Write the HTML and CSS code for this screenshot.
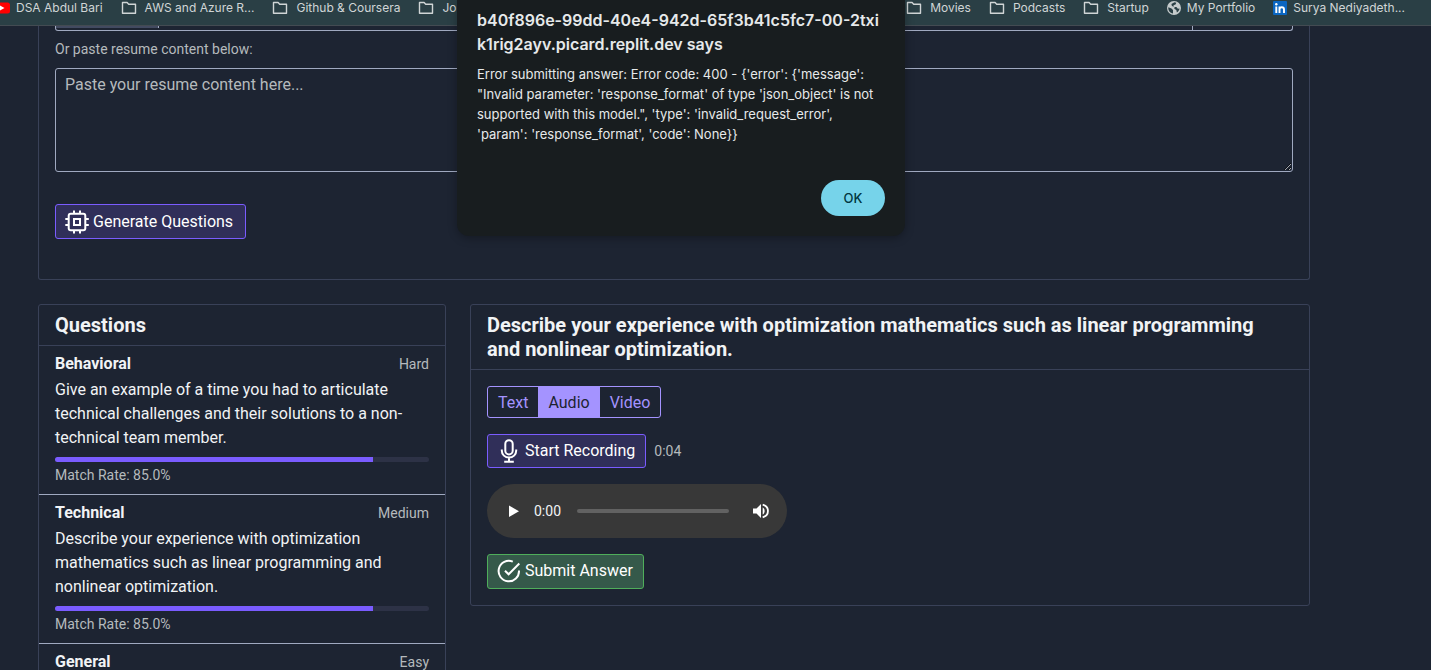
FILE: index.html
```html
<!DOCTYPE html>
<html lang="en">
<head>
<meta charset="utf-8">
<title>Interview Practice</title>
<link rel="stylesheet" href="styles.css">
</head>
<body>
<svg class="sprite" aria-hidden="true">
  <symbol id="folder" viewBox="0 0 16 14"><path d="M1.5 1.5h4.6l1.6 1.8h6.8v9H1.5z" fill="none" stroke="currentColor" stroke-width="1.4" stroke-linejoin="round"/></symbol>
</svg>
<nav class="bookmarks" aria-label="Bookmarks">
  <div class="bookmark-group">
    <a class="bookmark site" href="#"><svg class="yt" viewBox="6 0 10 14"><rect x="0" y="1.500" width="16" height="11" rx="2.500" fill="#f00"/><path d="M6 4.500v5l4.500-2.500z" fill="#fff"/></svg>DSA Abdul Bari</a>
    <a class="bookmark" href="#"><svg class="bm-icon"><use href="#folder"/></svg>AWS and Azure R...</a>
    <a class="bookmark" href="#"><svg class="bm-icon"><use href="#folder"/></svg>Github &amp; Coursera</a>
    <a class="bookmark" href="#"><svg class="bm-icon"><use href="#folder"/></svg>Jo</a>
  </div>
  <div class="bookmark-group">
    <a class="bookmark" href="#"><svg class="bm-icon"><use href="#folder"/></svg>Movies</a>
    <a class="bookmark" href="#"><svg class="bm-icon"><use href="#folder"/></svg>Podcasts</a>
    <a class="bookmark" href="#"><svg class="bm-icon"><use href="#folder"/></svg>Startup</a>
    <a class="bookmark site" href="#"><svg class="site-icon" viewBox="0 0 14 14"><circle cx="7" cy="7" r="7" fill="#c5cbcc"/><path d="M1.300 6.300l3.200 1.200 1.500 1.500v3.500C3 12.300 1 9.500 1.300 6.300zM7.500 1.300l1.800.5-.8 1.700-2 .8.300 1.500 2.600.3 1.500 1.600 1.600-.2c-.2 1.700-1.100 3.200-2.600 4l-.6-2.500-2-1.200.3-1.700-2.700-1-.5-2z" fill="#2a3f45"/></svg>My Portfolio</a>
    <a class="bookmark site" href="#"><svg class="site-icon" viewBox="0 0 14 14"><rect width="14" height="14" rx="1" fill="#0a66c2"/><circle cx="3.300" cy="3.300" r="1.200" fill="#fff"/><path d="M3.300 5.400V12M6.500 5.400V12M6.500 8.500c0-3 4.500-3 4.500 0V12" fill="none" stroke="#fff" stroke-width="1.900"/></svg>Surya Nediyadeth...</a>
  </div>
</nav>

<main class="page">
  <section class="card resume">
    <div class="upload-edge"><span class="choose"></span><span class="upload"></span></div>
    <label class="small" for="resume">Or paste resume content below:</label>
    <textarea id="resume" placeholder="Paste your resume content here..."></textarea>
    <button class="btn primary generate" type="button">
      <svg class="icon" viewBox="0 0 24 24"><rect x="3.700" y="3.700" width="16.600" height="16.600" rx="2"/><rect x="9" y="9" width="6" height="6"/><path d="M9 .500v3M15 .500v3M9 20.500v3M15 20.500v3M.300 9h3M.300 15h3M20.500 9h3.300M20.500 15h3.300"/></svg>
      Generate Questions</button>
  </section>

  <div class="columns">
    <section class="card questions">
      <h2 class="card-header">Questions</h2>
      <article class="question">
        <div class="question-top"><h3>Behavioral</h3><span class="small">Hard</span></div>
        <p>Give an example of a time you had to articulate technical challenges and their solutions to a non-technical team member.</p>
        <div class="progress"><div class="progress-bar" style="width:85%"></div></div>
        <div class="small">Match Rate: 85.0%</div>
      </article>
      <article class="question">
        <div class="question-top"><h3>Technical</h3><span class="small">Medium</span></div>
        <p>Describe your experience with optimization mathematics such as linear programming and nonlinear optimization.</p>
        <div class="progress"><div class="progress-bar" style="width:85%"></div></div>
        <div class="small">Match Rate: 85.0%</div>
      </article>
      <article class="question">
        <div class="question-top"><h3>General</h3><span class="small">Easy</span></div>
      </article>
    </section>

    <section class="card answer">
      <h2 class="card-header">Describe your experience with optimization mathematics such as linear programming and nonlinear optimization.</h2>
      <div class="answer-body">
        <div class="modes">
          <button type="button">Text</button><button class="active" type="button">Audio</button><button type="button">Video</button>
        </div>
        <div class="record">
          <button class="btn primary" type="button">
            <svg class="icon" viewBox="0 0 24 24"><rect x="8.300" y="1.200" width="7.400" height="14.300" rx="3.700"/><path d="M4.800 10.500v1.300a7.200 6.800 0 0 0 14.400 0v-1.300M12 18.600v4M7.200 22.800h9.600"/></svg>
            Start Recording</button>
          <span class="small">0:04</span>
        </div>
        <div class="player">
          <button type="button" aria-label="Play"><svg viewBox="0 0 16 16"><path d="M3 2.500v11.500l10-5.750z" fill="#fff"/></svg></button>
          <span class="time">0:00</span>
          <input type="range" min="0" max="100" value="0" aria-label="Seek">
          <button type="button" aria-label="Mute"><svg viewBox="0 0 16 16"><path d="M0 5.500h3.500L8 1v14l-4.500-4.500H0zM9.700 4.400c2.600 1.400 2.600 5.800 0 7.200z" fill="#fff"/><path d="M9.700 1.700c7 2 7 10.600 0 12.600" fill="none" stroke="#fff" stroke-width="1.800"/></svg></button>
        </div>
        <button class="btn success" type="button">
          <svg class="icon" viewBox="0 0 24 24"><path d="M15.800 2.700A10.200 10.200 0 1 0 22 11.500M8 11.700l3.600 3.600L22.300 4.500"/></svg>
          Submit Answer</button>
      </div>
    </section>
  </div>
</main>

<div class="dialog" role="alertdialog" aria-labelledby="dialog-title" aria-describedby="dialog-text">
  <h1 id="dialog-title">b40f896e-99dd-40e4-942d-65f3b41c5fc7-00-2txi<wbr>k1rig2ayv.picard.replit.dev says</h1>
  <p id="dialog-text">Error submitting answer: Error code: 400 - {'error': {'message': "Invalid parameter: 'response_format' of type 'json_object' is not supported with this model.", 'type': 'invalid_request_error', 'param': 'response_format', 'code': None}}</p>
  <button type="button">OK</button>
</div>
</body>
</html>
```
FILE: styles.css
```css
* { box-sizing: border-box; }
body {
  margin: 0;
  height: 100vh;
  overflow: hidden;
  background: #1d2432;
  color: #f1f3f5;
  font: 16px/24px Roboto, "Noto Sans", sans-serif;
}
h1, h2, h3, p { margin: 0; }
button, textarea { font: inherit; color: inherit; }
button { cursor: pointer; }
.sprite { display: none; }

.bookmarks {
  display: flex;
  justify-content: space-between;
  padding: 0 26px 9px 0;
  background: #2a3f45;
  border-bottom: 1px solid #434b52;
  font: 400 12px/16px Inter, sans-serif;
}
.bookmark-group { display: flex; gap: 18px; }
.bookmark {
  display: flex;
  align-items: center;
  gap: 8px;
  color: #d0d5d6;
  text-decoration: none;
  white-space: nowrap;
}
.bookmark.site { gap: 6px; }
.bm-icon { width: 16px; height: 14px; }
.site-icon { width: 14px; height: 14px; }
.yt { width: 10px; height: 14px; }

.page { padding: 0 121px 0 38px; }
.card { border: 1px solid #394158; border-radius: 3px; }
.resume {
  display: flex;
  flex-direction: column;
  align-items: flex-start;
  padding: 0 16px 40px;
  border-top: 0;
  border-radius: 0 0 3px 3px;
}
.small { color: #b5babd; font-size: 14px; }
.upload-edge {
  display: flex;
  justify-content: space-between;
  width: 100%;
  height: 5px;
  margin-bottom: 6px;
  border: 1px solid #a0a9c0;
  border-top: 0;
  border-radius: 0 0 3px 3px;
}
.choose { width: 103px; height: 2px; background: #424a60; border-right: 1px solid #a0a9c0; }
.upload { width: 100px; border-left: 1px solid #a0a9c0; }
textarea {
  width: 100%;
  height: 104px;
  margin: 7px 0 32px;
  padding: 4px 9px 2px;
  background: transparent;
  border: 1px solid #a0a9c0;
  border-radius: 3px;
  resize: vertical;
}
textarea::placeholder { color: #b5babd; opacity: 1; }

.btn {
  display: inline-flex;
  align-items: center;
  gap: 4px;
  padding: 4px 10px 4px 9px;
  border: 1px solid;
  border-radius: 3px;
  color: #fff;
  white-space: nowrap;
}
.btn.primary { background: #302f59; border-color: #7a5cff; }
.btn.generate { padding: 5px 12px 4px 9px; }
.btn.success { padding-bottom: 5px; background: #35594a; border-color: #4fae5b; }
.icon { width: 24px; height: 24px; fill: none; stroke: #fff; stroke-width: 2; }

.columns {
  display: grid;
  grid-template-columns: repeat(12, 1fr);
  gap: 24px;
  align-items: start;
  margin-top: 24px;
}
.questions { grid-column: span 4; }
.answer { grid-column: span 8; }
.card-header {
  padding: 8px 24px 8px 16px;
  border-bottom: 1px solid #394158;
  font-size: 20px;
  font-weight: 700;
  line-height: 24px;
}
.question { padding: 8px 16px 7px; }
.question + .question { border-top: 1px solid #a0a9c0; }
.question-top {
  display: flex;
  justify-content: space-between;
  align-items: baseline;
  margin-bottom: 4px;
  line-height: 19px;
}
.question-top h3 { font-size: 16px; font-weight: 700; }
.progress {
  height: 5px;
  margin: 7px 0 1px;
  overflow: hidden;
  background: #2d3246;
  border-radius: 3px;
}
.progress-bar { height: 100%; background: #7a5cff; }

.answer-body {
  display: flex;
  flex-direction: column;
  align-items: flex-start;
  gap: 16px;
  padding: 16px;
}
.modes {
  display: flex;
  overflow: hidden;
  border: 1px solid #a493ff;
  border-radius: 3px;
}
.modes button {
  padding: 4px 10px 2px;
  background: transparent;
  border: 0;
  color: #a493ff;
}
.modes .active { background: #a493ff; color: #1d2432; }
.record { display: flex; align-items: center; gap: 8px; }
.player {
  display: flex;
  align-items: center;
  width: 300px;
  height: 54px;
  padding: 0 18px 0 19px;
  background: #383838;
  border-radius: 27px;
}
.player button { width: 16px; height: 16px; padding: 0; background: none; border: 0; }
.player svg { display: block; width: 16px; height: 16px; }
.time { margin: 0 16px 0 12px; font-size: 14px; }
.player input {
  flex: 1;
  min-width: 0;
  height: 4px;
  margin: 0 24px 0 0;
  appearance: none;
  background: #626262;
  border-radius: 2px;
}
.player input::-webkit-slider-thumb { appearance: none; width: 0; height: 0; }

.dialog {
  position: absolute;
  top: 0;
  left: 457px;
  display: flex;
  flex-direction: column;
  width: 448px;
  padding: 8px 20px 20px;
  background: #181d1f;
  border-radius: 0 0 12px 12px;
  box-shadow: 0 2px 10px rgba(0, 0, 0, 0.3);
  color: #e6e9ea;
  font: 400 13px/20px Inter, sans-serif;
}
.dialog h1 { margin-bottom: 8px; font-size: 16px; font-weight: 600; line-height: 24px; }
.dialog button {
  align-self: flex-end;
  width: 64px;
  height: 36px;
  margin-top: 36px;
  background: #76d3ea;
  border: 0;
  border-radius: 18px;
  color: #003640;
  font-weight: 500;
}
```
